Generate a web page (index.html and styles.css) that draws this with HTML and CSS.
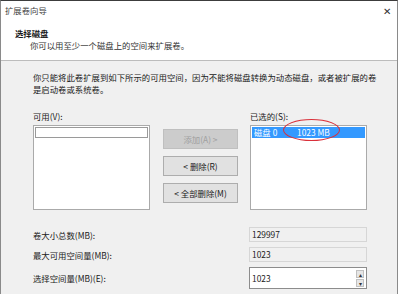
FILE: index.html
```html
<!DOCTYPE html>
<html lang="zh-CN">
<head>
  <meta charset="UTF-8">
  <title>扩展卷向导</title>
  <link rel="stylesheet" href="styles.css">
</head>
<body>
  <div class="wizard">
    <div class="header">
      <div class="title-bar">
        <span class="title">扩展卷向导</span>
        <span class="close">&#x2715;</span>
      </div>
      <div class="step-title">选择磁盘</div>
      <div class="step-desc">你可以用至少一个磁盘上的空间来扩展卷。</div>
    </div>
    <div class="content">
      <p class="note">你只能将此卷扩展到如下所示的可用空间，因为不能将磁盘转换为动态磁盘，或者被扩展的卷是启动卷或系统卷。</p>
      <div class="lists">
        <div class="list-col">
          <div class="list-label">可用(V):</div>
          <div class="listbox">
            <div class="row focus"></div>
          </div>
        </div>
        <div class="buttons">
          <button class="btn" disabled>添加(A) &gt;</button>
          <button class="btn">&lt; 删除(R)</button>
          <button class="btn">&lt; 全部删除(M)</button>
        </div>
        <div class="list-col">
          <div class="list-label">已选的(S):</div>
          <div class="listbox">
            <div class="row selected">
              <span class="disk">磁盘 0</span>
              <span class="size">1023 MB</span>
              <span class="mark"></span>
            </div>
          </div>
        </div>
      </div>
      <div class="fields">
        <div class="field-row">
          <span class="field-label">卷大小总数(MB):</span>
          <div class="box readonly">129997</div>
        </div>
        <div class="field-row">
          <span class="field-label">最大可用空间量(MB):</span>
          <div class="box readonly">1023</div>
        </div>
        <div class="field-row">
          <span class="field-label">选择空间量(MB)(E):</span>
          <div class="box spin">
            <span>1023</span>
            <div class="spin-btns">
              <span class="spin-btn">&#9652;</span>
              <span class="spin-btn">&#9662;</span>
            </div>
          </div>
        </div>
      </div>
    </div>
  </div>
</body>
</html>
```

FILE: styles.css
```css
body {
  margin: 0;
  background: #ffffff;
  font-family: "Noto Sans CJK SC", "Liberation Sans", sans-serif;
  font-size: 8.4px;
  color: #1a1a1a;
}
.wizard {
  width: 396px;
  height: 293px;
  border-top: 1px solid #3c3c3c;
  border-left: 1px solid #8a8a8a;
  border-right: 1px solid #8a8a8a;
  background: #f0f0f0;
  overflow: hidden;
}
.header {
  background: #ffffff;
  height: 59px;
  border-bottom: 1px solid #bcbcbc;
}
.title-bar {
  display: flex;
  justify-content: space-between;
  align-items: center;
  height: 18px;
  padding: 0 6px 0 4px;
}
.title {
  color: #444;
}
.close {
  font-size: 10px;
  color: #333;
}
.step-title {
  font-weight: bold;
  padding-left: 14px;
  margin-top: 8px;
  line-height: 12px;
}
.step-desc {
  padding-left: 29px;
  line-height: 12px;
  color: #333;
}
.content {
  padding: 10px 0 0 32px;
}
.note {
  margin: 0;
  width: 350px;
  line-height: 12px;
}
.lists {
  display: flex;
  margin-top: 15px;
}
.list-label {
  line-height: 12px;
  height: 15px;
}
.listbox {
  width: 113px;
  height: 81px;
  background: #ffffff;
  border: 1px solid #aaaaaa;
  padding: 1px;
}
.row {
  height: 11px;
  line-height: 11px;
  box-sizing: border-box;
}
.row.focus {
  border: 1px solid #9a9a9a;
}
.row.selected {
  position: relative;
  background: #3399ff;
  color: #ffffff;
  display: flex;
  padding-left: 2px;
}
.disk {
  width: 43px;
}
.mark {
  position: absolute;
  left: 31px;
  top: -8px;
  width: 55px;
  height: 20px;
  border: 1.5px solid #d9303a;
  border-radius: 50%;
}
.buttons {
  display: flex;
  flex-direction: column;
  gap: 7px;
  padding: 19px 12px 0 13px;
}
.btn {
  width: 75px;
  height: 20px;
  padding: 0;
  font-family: inherit;
  font-size: 8.4px;
  color: #1a1a1a;
  background: #e1e1e1;
  border: 1px solid #adadad;
}
.btn:disabled {
  background: #cccccc;
  border-color: #bfbfbf;
  color: #a0a0a0;
}
.fields {
  margin-top: 17px;
  display: flex;
  flex-direction: column;
  gap: 5px;
}
.field-row {
  display: flex;
  align-items: center;
}
.field-label {
  width: 216px;
}
.box {
  width: 114px;
  height: 13px;
  line-height: 13px;
  padding-left: 2px;
  border: 1px solid #d6d6d6;
}
.box.spin {
  height: 20px;
  line-height: 20px;
  background: #ffffff;
  border-color: #8c8c8c;
  display: flex;
  justify-content: space-between;
  align-items: center;
}
.spin-btns {
  display: flex;
  flex-direction: column;
  gap: 1px;
  margin-right: 2px;
}
.spin-btn {
  width: 8px;
  height: 8px;
  line-height: 8px;
  font-size: 6px;
  text-align: center;
  background: #e6e6e6;
  border: 1px solid #c0c0c0;
  box-sizing: border-box;
  color: #333;
}
```
